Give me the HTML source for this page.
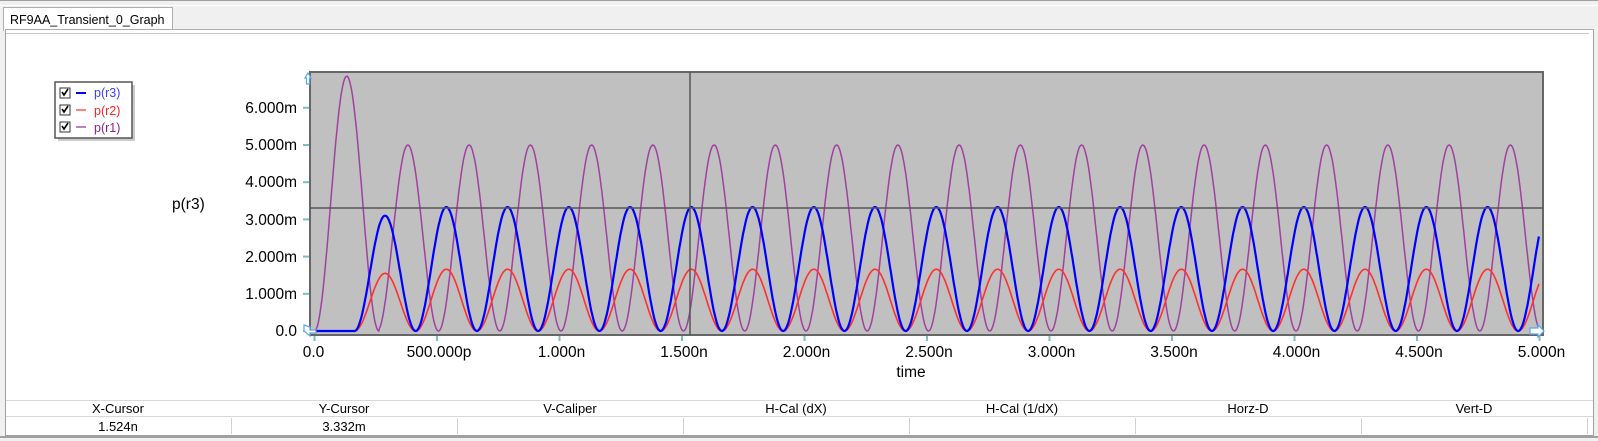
<!DOCTYPE html>
<html><head><meta charset="utf-8"><style>
body{margin:0;width:1598px;height:441px;background:#f0f0f0;font-family:"Liberation Sans",Arial,sans-serif;position:relative;overflow:hidden}
.abs{position:absolute}
</style></head><body>
<div class="abs" style="left:0;top:0;width:1598px;height:1px;background:#a0a0a0"></div>
<div class="abs" style="left:0;top:5px;width:1598px;height:1px;background:#fff"></div>
<div class="abs" style="left:3px;top:7px;width:170px;height:24px;background:#fff;border:1px solid #adadad;border-bottom:none;font-size:12.5px;line-height:24px;padding-left:6px;box-sizing:border-box">RF9AA_Transient_0_Graph</div>
<div class="abs" style="left:5px;top:29px;width:1589px;height:407px;border:1px solid #a0a0a0;border-top:1px solid #adadad;background:#fff;box-sizing:border-box"></div>
<div class="abs" style="left:6px;top:33px;width:1583px;height:1px;background:#c8c8c8"></div>
<svg class="abs" style="left:0;top:0" width="1598" height="441" xmlns="http://www.w3.org/2000/svg" font-family="Liberation Sans, Arial, sans-serif">
<rect x="310" y="72" width="1233" height="263" fill="#c0c0c0" stroke="#666" stroke-width="2"/>
<g id="curves"></g>
<line x1="690" y1="72" x2="690" y2="335" stroke="#555" stroke-width="1.5"/>
<line x1="310" y1="208" x2="1543" y2="208" stroke="#555" stroke-width="1.5"/>
<g font-size="15.5" fill="#000" text-anchor="end">
<text x="297" y="336">0.0</text><text x="297" y="299">1.000m</text><text x="297" y="262">2.000m</text><text x="297" y="225">3.000m</text><text x="297" y="187">4.000m</text><text x="297" y="150">5.000m</text><text x="297" y="113">6.000m</text>
</g>
<g stroke="#7ebebe" stroke-width="2" id="ticks"></g>
<g font-size="15.5" fill="#000" text-anchor="middle" id="xl"></g>
<text x="911" y="377" font-size="15.5" text-anchor="middle">time</text>
<text x="172" y="209" font-size="15.5">p(r3)</text>
<path d="M305 78 L308 73 L311 78 L309.5 78 L309.5 84 L306.5 84 L306.5 78Z" fill="#fff" stroke="#5aa7e6" stroke-width="1.2"/>
<path d="M304 325 L310 327 L310 330 L316 330 L316 333 L310 333 L310 336 L304 331Z" fill="#fff" stroke="#5aa7e6" stroke-width="1.2"/>
<path d="M1530 328 L1538 328 L1538 325 L1544 331 L1538 337 L1538 334 L1530 334Z" fill="#fff" stroke="#5aa7e6" stroke-width="1.2"/>
<rect x="58" y="85" width="77" height="56" fill="#999" opacity="0.5"/>
<rect x="55" y="82" width="77" height="56" fill="#fff" stroke="#555" stroke-width="1.5"/>
<g font-size="12.5">
<rect x="60" y="88" width="10" height="10" fill="#fff" stroke="#333"/><path d="M62 92 l2 3 l4 -6" stroke="#000" stroke-width="1.6" fill="none"/>
<line x1="76" y1="93" x2="86" y2="93" stroke="#0000ff" stroke-width="2"/><text x="94" y="97" fill="#3c3cff">p(r3)</text>
<rect x="60" y="105" width="10" height="10" fill="#fff" stroke="#333"/><path d="M62 109 l2 3 l4 -6" stroke="#000" stroke-width="1.6" fill="none"/>
<line x1="76" y1="110" x2="86" y2="110" stroke="#ff8080" stroke-width="2"/><text x="94" y="115" fill="#ff2020">p(r2)</text>
<rect x="60" y="122" width="10" height="10" fill="#fff" stroke="#333"/><path d="M62 126 l2 3 l4 -6" stroke="#000" stroke-width="1.6" fill="none"/>
<line x1="76" y1="127" x2="86" y2="127" stroke="#c080c0" stroke-width="2"/><text x="94" y="132" fill="#8a2090">p(r1)</text>
</g>
</svg>
<div class="abs" style="left:6px;top:400px;width:1587px;height:1px;background:#d8d8d8"></div>
<div class="abs" style="left:6px;top:416px;width:1587px;height:1px;background:#d8d8d8"></div>
<div class="abs" style="left:0;top:436px;width:1598px;height:2px;background:#a0a0a0"></div>
<div id="tbl"></div>
<script>
var X0=314.5,K=245,Y0=331,YK=37.2;
function px(t){return X0+t*K}function py(v){return Y0-v*YK}
function blue(t){if(t<0.163)return 0;var s=Math.sin(Math.PI*(t-0.163)/0.25);var a=t<0.413?3.1:3.332;return a*s*s}
function red(t){if(t<0.163)return 0;var s=Math.sin(Math.PI*(t-0.163)/0.25);var a=t<0.413?1.55:1.66;return a*s*s}
function purp(t){if(t<0.263){var s=Math.sin(Math.PI*t/0.263);return 6.85*s*s}var s=Math.sin(Math.PI*(t-0.256)/0.25);return 5*s*s}
function path(f){var d="";for(var t=0;t<=5.0;t+=0.0025){d+=(d?"L":"M")+px(t).toFixed(1)+" "+py(f(t)).toFixed(1)}return d}
var g=document.getElementById("curves");
g.innerHTML='<path d="'+path(purp)+'" fill="none" stroke="#a040a0" stroke-width="1.5"/>'+
'<path d="'+path(red)+'" fill="none" stroke="#ff3030" stroke-width="1.6"/>'+
'<path d="'+path(blue)+'" fill="none" stroke="#0000ff" stroke-width="2.2"/>';
var tk="",xl="",labs=["0.0","500.000p","1.000n","1.500n","2.000n","2.500n","3.000n","3.500n","4.000n","4.500n","5.000n"];
for(var i=0;i<=10;i++){var x=X0+i*122.5;tk+='<line x1="'+x+'" y1="336" x2="'+x+'" y2="341"/>';xl+='<text x="'+(x+(i==0?-1:2))+'" y="357">'+labs[i]+'</text>'}
for(var j=0;j<=6;j++){var y=Y0-j*YK;tk+='<line x1="303" y1="'+y+'" x2="309" y2="'+y+'"/>'}
document.getElementById("ticks").innerHTML=tk;document.getElementById("xl").innerHTML=xl;
var h=["X-Cursor","Y-Cursor","V-Caliper","H-Cal (dX)","H-Cal (1/dX)","Horz-D","Vert-D"],v=["1.524n","3.332m","","","","",""],s="";
for(var c=0;c<7;c++){var l=5+c*226;s+='<div class="abs" style="left:'+l+'px;top:400px;width:226px;height:16px;font-size:13px;line-height:17px;text-align:center">'+h[c]+'</div>';
s+='<div class="abs" style="left:'+l+'px;top:417px;width:226px;height:18px;font-size:13px;line-height:19px;text-align:center">'+v[c]+'</div>';
s+='<div class="abs" style="left:'+(l+226)+'px;top:418px;width:1px;height:16px;background:#d0d0d0"></div>'}
document.getElementById("tbl").innerHTML=s;
</script>
</body></html>
